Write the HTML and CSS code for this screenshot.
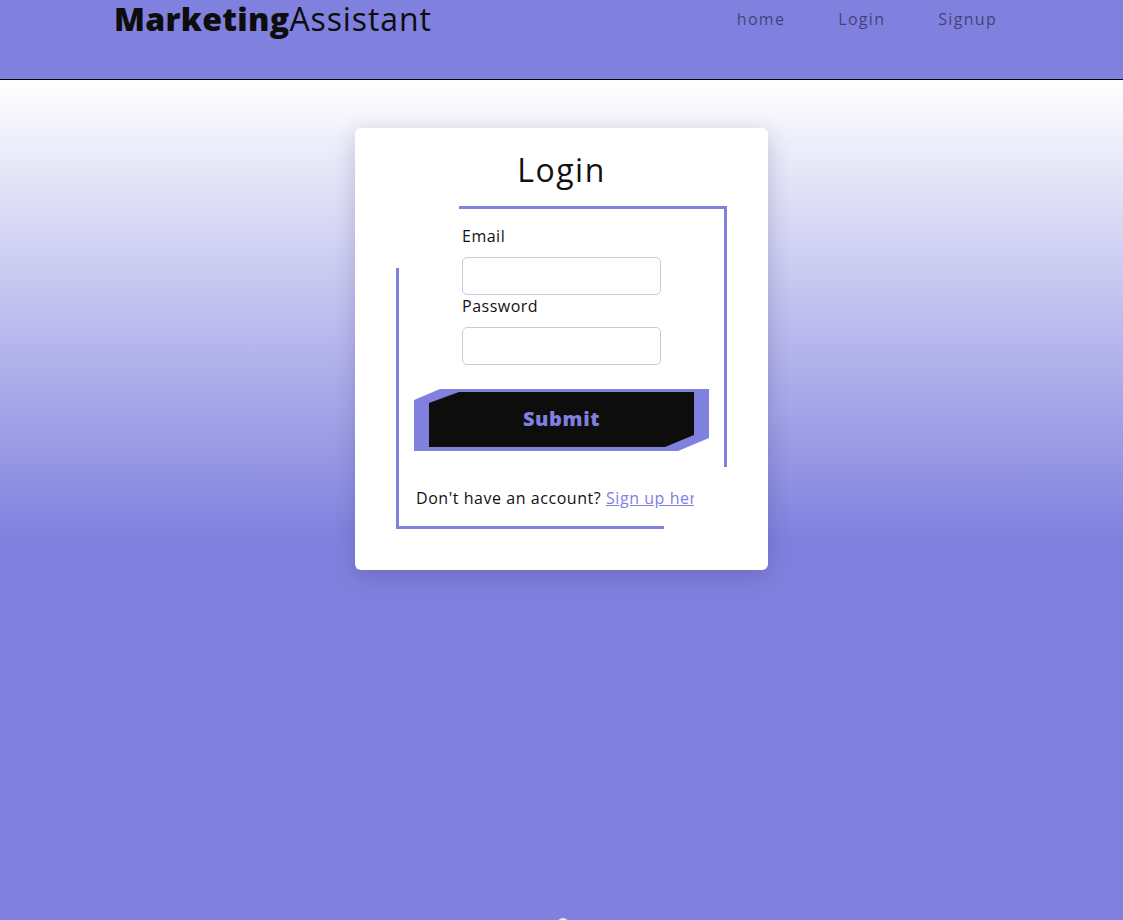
FILE: index.html
```html
<!DOCTYPE html>
<html lang="en">
<head>
<meta charset="utf-8">
<title>Marketing Assistant - Login</title>
<link rel="stylesheet" href="styles.css">
</head>
<body>
<header class="topbar">
  <div class="logo"><span class="logo-bold">Marketing</span><span class="logo-light">Assistant</span></div>
  <nav class="nav">
    <a href="#" class="nav-link">home</a>
    <a href="#" class="nav-link">Login</a>
    <a href="#" class="nav-link">Signup</a>
  </nav>
</header>
<main class="main">
  <section class="card">
    <h1 class="card-title">Login</h1>
    <form class="frame">
      <label class="field-label" for="email">Email</label>
      <input class="field-input" id="email" type="email">
      <label class="field-label" for="password">Password</label>
      <input class="field-input" id="password" type="password">
      <button class="submit" type="button"><span class="submit-inner">Submit</span></button>
      <p class="signup-text">Don't have an account? <a href="#" class="signup-link">Sign up here</a></p>
    </form>
  </section>
</main>
<footer class="footer"><span class="footer-dot"></span></footer>
</body>
</html>
```
FILE: styles.css
```css
* { box-sizing: border-box; }
html, body { margin: 0; padding: 0; }
body {
  font-family: "Open Sans", "Liberation Sans", sans-serif;
  background: #8080df;
  color: #111;
  overflow: hidden;
}
.topbar {
  height: 80px;
  background: #8080df;
  border-bottom: 1px solid #000;
  display: flex;
  justify-content: space-between;
  align-items: flex-start;
  padding: 0 126px 0 114px;
}
.logo {
  font-size: 32px;
  line-height: 40px;
  margin-top: -1px;
  color: #0d0d0d;
  letter-spacing: 0.3px;
}
.logo-bold { font-weight: 800; }
.logo-light { font-weight: 400; letter-spacing: 0.9px; }
.nav {
  display: flex;
  gap: 53px;
  padding-top: 8px;
}
.nav-link {
  font-size: 16px;
  line-height: 22px;
  letter-spacing: 1.3px;
  color: rgba(0, 0, 0, 0.5);
  text-decoration: none;
}
.main {
  height: 838px;
  background: linear-gradient(#ffffff 0px, #8080df 460px);
  padding-top: 48px;
}
.card {
  width: 413px;
  margin: 0 auto;
  background: #fff;
  border-radius: 6px;
  box-shadow: 0 6px 22px rgba(40, 40, 90, 0.22);
  padding: 21px 41px 41px;
}
.card-title {
  margin: 0 0 16px;
  text-align: center;
  font-size: 32px;
  font-weight: 400;
  line-height: 41px;
  letter-spacing: 1.5px;
  color: #111;
}
.frame {
  position: relative;
  height: 323px;
  display: flex;
  flex-direction: column;
  align-items: center;
  padding-top: 20px;
}
.frame::before,
.frame::after {
  content: "";
  position: absolute;
  width: 80%;
  height: 80%;
  border: 0 solid #8080df;
  pointer-events: none;
}
.frame::before {
  top: 0;
  right: 0;
  border-top-width: 3px;
  border-right-width: 3px;
}
.frame::after {
  bottom: 0;
  left: 0;
  border-bottom-width: 3px;
  border-left-width: 3px;
}
.field-label {
  width: 199px;
  font-size: 16px;
  line-height: 20px;
  letter-spacing: 0.5px;
  color: #111;
}
.field-input + .field-label { margin-top: 1px; }
.field-label + .field-input { margin-top: 11px; }
.field-input {
  width: 199px;
  height: 38px;
  border: 1px solid #c8ccd6;
  border-radius: 5px;
  background: #fff;
  font: inherit;
}
.submit {
  margin-top: 24px;
  width: 295px;
  height: 62px;
  border: 0;
  padding: 3px 15px 4px;
  background: #8080df;
  clip-path: polygon(0 11px, 26px 0, 100% 0, 100% 49px, 264px 100%, 0 100%);
  cursor: pointer;
  display: flex;
  font-family: inherit;
}
.submit-inner {
  flex: 1;
  background: #0d0d0d;
  color: #8080df;
  font-family: "Open Sans", "Liberation Sans", sans-serif;
  font-size: 20px;
  font-weight: 800;
  letter-spacing: 0.6px;
  display: flex;
  align-items: center;
  justify-content: center;
  clip-path: polygon(0 11px, 30px 0, 100% 0, 100% 43px, 236px 100%, 0 100%);
  padding-bottom: 2px;
}
.signup-text {
  align-self: flex-start;
  margin: 37px 0 0 20px;
  width: 278px;
  white-space: nowrap;
  overflow: hidden;
  font-size: 16px;
  line-height: 20px;
  letter-spacing: 0.55px;
  color: #111;
}
.signup-link {
  color: #8080df;
}
.footer {
  display: flex;
  justify-content: center;
}
.footer-dot {
  width: 12px;
  height: 12px;
  border-radius: 50%;
  background: #e8e8ff;
  margin-left: 2px;
}
```
